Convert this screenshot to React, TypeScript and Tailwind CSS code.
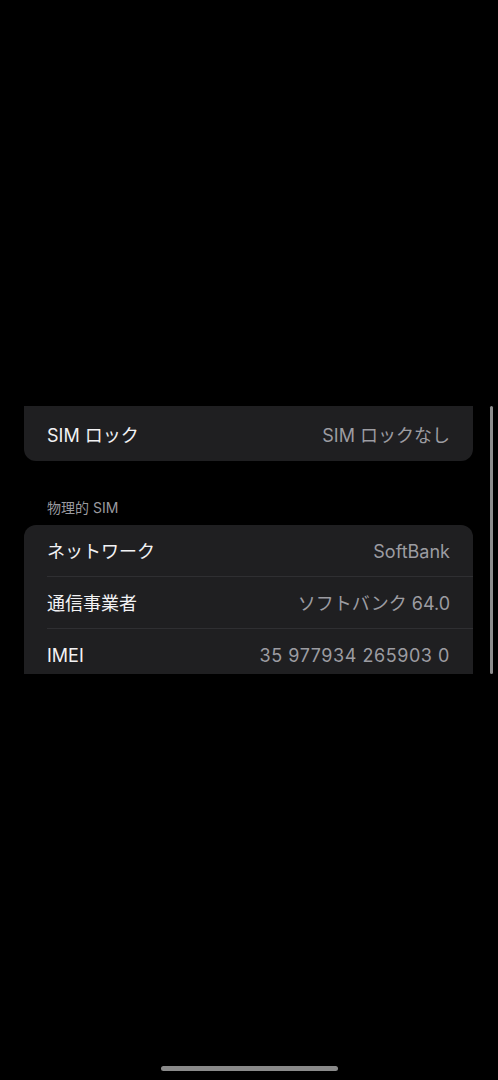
import React from 'react'

const font = { fontFamily: 'Inter, "Noto Sans CJK JP", sans-serif' }

const Row = ({ label, value, divider = false, valueClass = '' }: { label: string; value: string; divider?: boolean; valueClass?: string }) => (
  <div className="relative flex h-[52px] items-center justify-between pl-[23px] pr-[23px]">
    <span className="text-[18px] text-[#f2f2f4]">{label}</span>
    <span className={`text-[18px] text-[#9c9ca1] ${valueClass}`}>{value}</span>
    {divider && <div className="absolute bottom-0 left-[23px] right-0 h-px bg-[#2f2f32]" />}
  </div>
)

export default function App() {
  return (
    <div className="flex h-[1080px] w-full flex-col bg-black" style={font}>
      <div className="h-[406px] shrink-0" />

      {/* scroll area */}
      <div className="relative h-[268px] shrink-0 overflow-hidden">
        <div className="mx-[24px] w-[449px]">
          <div className="rounded-b-[12px] bg-[#1f1f21] pt-[3px]">
            <Row label="SIM ロック" value="SIM ロックなし" />
          </div>

          <div className="pl-[23px] pt-[39px] pb-[9px] text-[14px] leading-[16px] text-[#9a9a9f]">物理的 SIM</div>

          <div className="rounded-t-[12px] bg-[#1f1f21]">
            <Row label="ネットワーク" value="SoftBank" divider />
            <Row label="通信事業者" value="ソフトバンク 64.0" divider />
            <Row label="IMEI" value="35 977934 265903 0" valueClass="tracking-[0.55px]" />
          </div>
        </div>

        <div className="absolute right-[5px] top-0 h-[268px] w-[3px] rounded-full bg-[#8c8c8c]" />
      </div>

      <div className="flex flex-1 flex-col justify-end pb-[9px]">
        <div className="mx-auto h-[5px] w-[177px] rounded-full bg-[#8a8a8a]" />
      </div>
    </div>
  )
}
